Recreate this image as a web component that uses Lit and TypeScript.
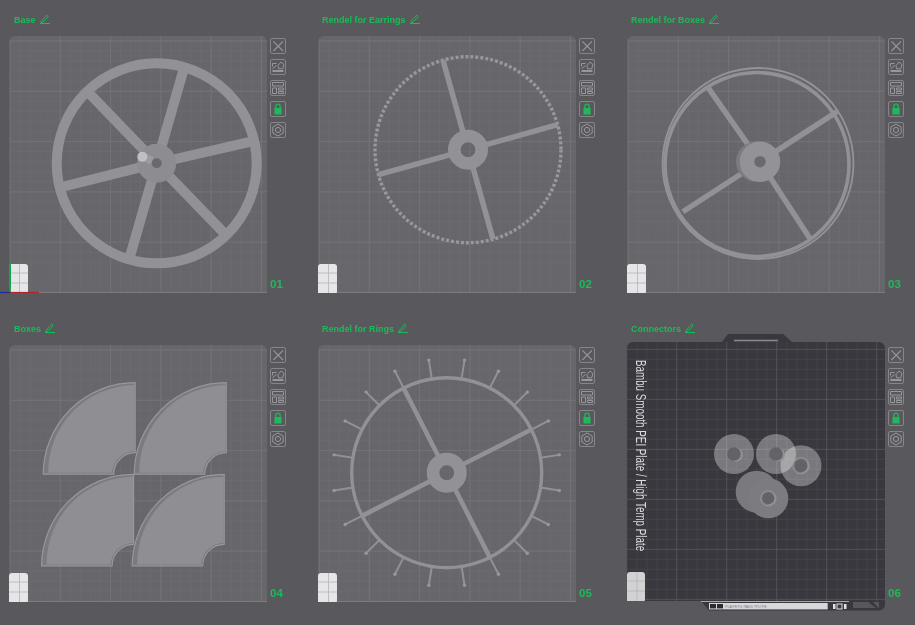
import { LitElement, html, css, svg } from "lit";
import { customElement } from "lit/decorators.js";

const W = "#929296";
const polar = (cx: number, cy: number, r: number, deg: number) => {
  const a = (deg * Math.PI) / 180;
  return [cx + r * Math.cos(a), cy + r * Math.sin(a)];
};
const spokes = (cx: number, cy: number, angles: number[], r0: number, r1: number, w: number) =>
  angles.map((d) => {
    const [x1, y1] = polar(cx, cy, r0, d);
    const [x2, y2] = polar(cx, cy, r1, d);
    return svg`<line x1=${x1} y1=${y1} x2=${x2} y2=${y2} stroke=${W} stroke-width=${w}></line>`;
  });

const tab = (fill = "#e6e6e9", y = 228, h = 29, w = 19) => svg`
  <path d="M0 ${y + h}V${y + 3}a3 3 0 0 1 3-3H${w - 3}a3 3 0 0 1 3 3V${y + h - 1}a1 1 0 0 1-1 1Z" fill=${fill}></path>
  <path d="M${w / 2 + 1} ${y}V${y + h}M0 ${y + 9}H${w}M0 ${y + 19}H${w}" stroke="#b4b4b8" stroke-width=".8"></path>`;

const base = () => {
  const c = [147.7, 127.3];
  return svg`
    <circle cx=${c[0]} cy=${c[1]} r="100" fill="none" stroke=${W} stroke-width="10"></circle>
    ${spokes(c[0], c[1], [-74, -13, 46, 106, 166, 226], 18, 98, 10)}
    <circle cx=${c[0]} cy=${c[1]} r="19.5" fill="#8d8d91"></circle>
    <circle cx=${c[0]} cy=${c[1]} r="5" fill="#6a6a6e"></circle>
    <line x1="134" y1="120.5" x2="143" y2="125" stroke="#9c9ca0" stroke-width="8"></line>
    <circle cx="133.3" cy="120.7" r="5" fill="#c0c0c2"></circle>
    ${tab()}
    <path d="M1 228V256.5" stroke="#12a84a" stroke-width="2"></path>
    <path d="M-9 256.5H1" stroke="#1c2a9a" stroke-width="1.2"></path>
    <path d="M1 256.5H30" stroke="#b0252a" stroke-width="1.2"></path>`;
};

const earrings = () => {
  const c = [150, 113.7];
  return svg`
    <circle cx=${c[0]} cy=${c[1]} r="93" fill="none" stroke="#98989c" stroke-width="3.4" stroke-dasharray="3 2"></circle>
    ${spokes(c[0], c[1], [-105.6, -15.6, 74.4, 164.4], 19, 93, 5.5)}
    <circle cx=${c[0]} cy=${c[1]} r="13.7" fill="none" stroke=${W} stroke-width="12.6"></circle>
    ${tab()}`;
};

const boxesRendel = () => {
  const c = [133, 125.7];
  return svg`
    <circle cx="131" cy="127.5" r="95.5" fill="none" stroke="#949498" stroke-width="1.8"></circle>
    <circle cx="130" cy="128.5" r="92" fill="none" stroke=${W} stroke-width="3.6"></circle>
    ${spokes(c[0], c[1], [-125, -33, 57, 147], 19, 92, 5.5)}
    <circle cx=${c[0] - 4} cy=${c[1]} r="20" fill="#7b7b80"></circle>
    <circle cx=${c[0]} cy=${c[1]} r="13" fill="none" stroke="#939397" stroke-width="14.4"></circle>
    <circle cx=${c[0]} cy=${c[1]} r="5.5" fill="#6a6a6f"></circle>
    ${tab()}`;
};

const quarter = (x: number, y: number) => svg`
  <g transform="translate(${x} ${y})">
    <path d="M92 0V70A21.5 21.5 0 0 0 70.5 91.5H0A92 92 0 0 1 92 0Z" fill="#7a7a7f" stroke="#98989c" stroke-width="1.2" stroke-linejoin="round"></path>
    <path d="M91.4 2.4V68.6A22.5 22.5 0 0 0 69 90H5A87 87 0 0 1 91.4 2.4Z" fill="#8f8f93"></path>
  </g>`;

const boxes = () => svg`
  ${quarter(34.2, 37.7)}${quarter(125.2, 37.7)}${quarter(32.6, 129.4)}${quarter(123.2, 129.4)}
  ${tab()}`;

const rings = () => {
  const c = [128.7, 127.7];
  const ticks = Array.from({ length: 20 }, (_, i) => -81 + i * 18);
  return svg`
    ${ticks.map((d) => {
      const [x1, y1] = polar(c[0], c[1], 95, d);
      const [x2, y2] = polar(c[0], c[1], 114, d);
      return svg`<line x1=${x1} y1=${y1} x2=${x2} y2=${y2} stroke=${W} stroke-width="2" stroke-linecap="round"></line>
      <circle cx=${x2} cy=${y2} r="1.7" fill="#98989c"></circle>`;
    })}
    <circle cx=${c[0]} cy=${c[1]} r="95" fill="none" stroke=${W} stroke-width="3.4"></circle>
    ${spokes(c[0], c[1], [-117, -27, 63, 153], 19, 95, 4.6)}
    <circle cx=${c[0]} cy=${c[1]} r="13.7" fill="none" stroke=${W} stroke-width="12.6"></circle>
    ${tab()}`;
};

const disc = (x: number, y: number, r = 20) => svg`<circle cx=${x} cy=${y} r=${r} fill="#fff" fill-opacity=".33"></circle>`;
const hole = (x: number, y: number, r = 6.8, ring = false) => svg`
  ${ring ? svg`<circle cx=${x} cy=${y} r=${r + 1.6} fill="none" stroke="#9a9a9c" stroke-width=".9"></circle>` : ""}
  <circle cx=${x + 2.2} cy=${y + 0.8} r=${r} fill="#929295"></circle>
  <circle cx=${x} cy=${y} r=${r} fill="#636367"></circle>`;

const connectors = () => {
  const maj: number[] = [];
  const min: number[] = [];
  for (let i = 0; i < 26; i++) (i % 5 === 0 ? maj : min).push(i * 10);
  return svg`
    <path d="M95 -3L101 -11H156L165 -3H252a6 6 0 0 1 6 6V259a6 6 0 0 1-6 6.5H82L74 256V-3Z" fill="#38383e"></path>
    <path d="M6 -3H100V256H4a4 4 0 0 1-4-4V3a6 6 0 0 1 6-6Z" fill="#38383e"></path>
    <g stroke="#45454b" stroke-width=".8">
      ${min.map((v) => svg`<path d="M${v} -3V256M0 ${v + 4.3}H258"></path>`)}
    </g>
    <g stroke="#56565c" stroke-width=".9">
      ${maj.map((v) => svg`<path d="M${v - 0.3} -3V256M0 ${v + 4.3}H258"></path>`)}
    </g>
    <path d="M107 -4.5H151" stroke="#8a8a8e" stroke-width="1.5"></path>
    <text class="bed-name" transform="translate(9 15) rotate(90) scale(.785 1.15)">Bambu Smooth PEI Plate / High Temp Plate</text>
    ${disc(107, 109)}${disc(149, 109)}${disc(174, 120.7, 20.5)}
    <circle cx="129.7" cy="146.7" r="21" fill="#7a7a7e"></circle>
    <circle cx="141.3" cy="153.3" r="20" fill="#7c7c80"></circle>
    ${hole(107, 109)}${hole(149, 109)}${hole(174, 120.7, 6.5, true)}${hole(141.3, 153.3, 6, true)}
    ${tab("#d2d2d5", 227, 29, 18)}
    <path d="M74 256.5H222" stroke="#a8a8aa" stroke-width="1.2"></path>
    <rect x="82" y="258" width="118.7" height="6.4" fill="#d8d8da"></rect>
    <rect x="83" y="259" width="6" height="4.4" fill="#2b2b30"></rect>
    <rect x="90" y="259" width="6" height="4.4" fill="#2b2b30"></rect>
    <text class="bed-label" x="98" y="263">PLA PETG PA6G TPU PE</text>
    <rect x="206" y="259" width="2.5" height="5" fill="#e0e0e2"></rect>
    <rect x="210" y="259" width="5" height="5" fill="none" stroke="#e0e0e2"></rect>
    <rect x="217" y="259" width="2.5" height="5" fill="#e0e0e2"></rect>
    <path d="M226 257H241L249 263H226ZM246 257H252V263.5H252Z" fill="#57575c"></path>
  `;
};

const plates = [
  { title: "Base", n: "01", art: base },
  { title: "Rendel for Earrings", n: "02", art: earrings },
  { title: "Rendel for Boxes", n: "03", art: boxesRendel },
  { title: "Boxes", n: "04", art: boxes },
  { title: "Rendel for Rings", n: "05", art: rings },
  { title: "Connectors", n: "06", art: connectors, dark: true },
];

const pencil = html`<svg class="pencil" viewBox="0 0 10 10" aria-hidden="true">
  <path d="M1 7.6L6.6 1.2L8.2 2.6L3 8.2L1 8.6Z" fill="none" stroke="currentColor" stroke-width="1"></path>
  <path d="M0 9.5H10" stroke="currentColor" stroke-width="1"></path>
</svg>`;

const icons = [
  html`<svg viewBox="0 0 16 16"><path d="M3.4 3.4L13 13M13 3.4L3.4 13" stroke="currentColor" stroke-width="1.1"></path></svg>`,
  html`<svg viewBox="0 0 16 16"><path d="M8 6.5L11 3L14 5.5L12.7 9.8H8.5ZM2.5 4.5H6.5M2.5 4.5V7.5M2.5 9.8L6.5 6.5" fill="none" stroke="currentColor" stroke-width="1"></path><path d="M2.5 12H13.5" stroke="currentColor" stroke-width="2"></path></svg>`,
  html`<svg viewBox="0 0 16 16"><path d="M2.5 2.5H13.5V6H2.5ZM2.5 8H6.5V13.5H2.5ZM8.5 8H13.5V10H8.5ZM8.5 11.5H13.5V13.5H8.5Z" fill="none" stroke="currentColor" stroke-width="1"></path></svg>`,
  html`<svg viewBox="0 0 16 16"><path d="M5.8 7V5.4a2.2 2.2 0 0 1 4.4 0V7" fill="none" stroke="#1fb45a" stroke-width="1.3"></path><rect x="4.4" y="7" width="7.2" height="6.6" rx=".6" fill="#1fb85a"></rect></svg>`,
  html`<svg viewBox="0 0 16 16"><path d="M8 2L13.2 5V11L8 14L2.8 11V5Z" fill="none" stroke="currentColor" stroke-width="1"></path><circle cx="8" cy="8" r="2.6" fill="none" stroke="currentColor" stroke-width="1"></circle></svg>`,
];

@customElement("app-root")
export class AppRoot extends LitElement {
  static styles = css`
    :host {
      display: block;
      width: 915px;
      height: 625px;
      overflow: hidden;
      background: #59595d;
      font-family: "Liberation Sans", Arial, sans-serif;
    }
    .sheet {
      display: grid;
      grid-template-columns: repeat(3, 309px);
      grid-auto-rows: 309px;
      padding: 13px 0 0 9px;
      filter: blur(0.35px);
    }
    .cell {
      display: flex;
      flex-direction: column;
    }
    .title {
      display: flex;
      align-items: center;
      gap: 4px;
      height: 14px;
      margin: 0 0 9px 4px;
      font-size: 9px;
      font-weight: 700;
      color: #1cba58;
      white-space: nowrap;
    }
    .cell:nth-child(3n + 1) .title {
      margin-left: 5px;
    }
    .pencil {
      width: 10px;
      height: 10px;
      margin-top: -3px;
    }
    .body {
      display: flex;
      gap: 3px;
      height: 257px;
    }
    .plate {
      width: 258px;
      height: 257px;
      box-sizing: border-box;
      border-left: 1px solid #66666b;
      border-radius: 6px 6px 0 0;
      background-color: #66666b;
      background-origin: border-box;
      background-image:
        linear-gradient(#7b7b80, #7b7b80),
        linear-gradient(90deg, #727277 1px, transparent 1px),
        linear-gradient(#727277 1px, transparent 1px),
        linear-gradient(90deg, #6a6a6f 1px, transparent 1px),
        linear-gradient(#6a6a6f 1px, transparent 1px);
      background-size: 100% 1px, 50.3px 100%, 100% 50.3px, 10.06px 100%, 100% 10.06px;
      background-position: 0 100%, 0.5px 0, 0 4.5px, 0.5px 0, 0 4.5px;
      background-repeat: no-repeat, repeat, repeat, repeat, repeat;
    }
    .plate.dark {
      background: none;
      border-left-color: transparent;
    }
    .plate svg {
      display: block;
      width: 258px;
      height: 257px;
      margin-left: -1px;
      overflow: visible;
    }
    .bed-name {
      font-size: 12.5px;
      fill: #dcdcde;
    }
    .bed-label {
      font-size: 3.6px;
      fill: #77777b;
    }
    .side {
      display: flex;
      flex-direction: column;
      gap: 5px;
      width: 16px;
      padding-top: 2px;
    }
    .tool {
      width: 16px;
      height: 16px;
      box-sizing: border-box;
      border: 1px solid #85858a;
      border-radius: 2px;
      color: #98989c;
    }
    .tool svg {
      display: block;
      width: 16px;
      height: 16px;
      margin: -1px;
    }
    .num {
      margin-top: auto;
      padding-bottom: 3px;
      font-size: 11.5px;
      line-height: 12px;
      font-weight: 700;
      color: #1cba58;
    }
  `;

  render() {
    return html`<div class="sheet">
      ${plates.map(
        (p) => html`<section class="cell">
          <div class="title"><span>${p.title}</span>${pencil}</div>
          <div class="body">
            <div class="plate ${p.dark ? "dark" : ""}">
              <svg viewBox="0 0 258 257">${p.art()}</svg>
            </div>
            <div class="side">
              ${icons.map((ic) => html`<div class="tool">${ic}</div>`)}
              <div class="num">${p.n}</div>
            </div>
          </div>
        </section>`
      )}
    </div>`;
  }
}
